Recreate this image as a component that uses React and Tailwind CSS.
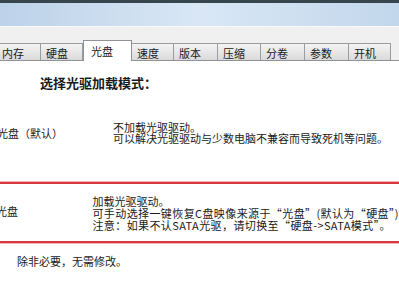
import React from 'react';

const tabs = [
    { label: '内存', w: 'w-[45px]' },
    { label: '硬盘', w: 'w-[43px]' },
    { label: '光盘', w: 'w-[49px]', active: true },
    { label: '速度', w: 'w-[43px]' },
    { label: '版本', w: 'w-[45px]' },
    { label: '压缩', w: 'w-[44px]' },
    { label: '分卷', w: 'w-[45px]' },
    { label: '参数', w: 'w-[45px]' },
    { label: '开机', w: 'w-[43px]' },
];

const App = () => {
    return (
        <div lang="zh-CN" className="w-[399px] h-[300px] overflow-hidden bg-white text-[#1a1a1a] font-['Noto_Sans_CJK_SC','Noto_Sans',sans-serif]">
            {/* window frame + title bar */}
            <div className="h-[3px] bg-[#37464c]"></div>
            <div className="h-[23px] bg-gradient-to-r from-[#bcd2e9] via-[#d9e7f5] to-[#c2d7ec]"></div>
            <div className="h-[16px] bg-[#f0f0f0] border-t border-[#fafafa]"></div>

            {/* tabs */}
            <div className="h-[19px] bg-[#f0f0f0] flex items-end border-b border-[#8f9296] -ml-[4px]">
                {tabs.map(tab => (
                    <div
                        key={tab.label}
                        className={
                            tab.active
                                ? `${tab.w} h-[21px] -mb-px bg-white border border-b-0 border-[#8f9296] pl-[7px] pt-[4px] text-[11px] leading-[12px] relative z-10`
                                : `${tab.w} h-[17px] bg-gradient-to-b from-[#f4f4f4] to-[#dadada] border border-b-0 border-[#9a9c9f] pl-[5px] pt-[3px] text-[11px] leading-[12px] -ml-px first:ml-0`
                        }
                    >
                        {tab.label}
                    </div>
                ))}
            </div>

            {/* content */}
            <div className="pt-[14px]">
                <div className="pl-[40px] text-[13px] leading-[15px] font-bold">选择光驱加载模式：</div>

                <div className="flex mt-[32px] h-[24px] text-[11px] leading-[11px]">
                    <div className="w-[116px] -ml-[3px] pt-[6px] whitespace-nowrap">光盘（默认）</div>
                    <div className="whitespace-nowrap">
                        <div>不加载光驱驱动。</div>
                        <div>可以解决光驱驱动与少数电脑不兼容而导致死机等问题。</div>
                    </div>
                </div>

                <div className="mt-[36px] border-y-2 border-[#d9363e] shadow-[0_0_0_1px_#f2b5b8] h-[61px] flex text-[11px] leading-[11px] whitespace-nowrap">
                    <div className="w-[117px] -ml-[4px] pt-[22px]">光盘</div>
                    <div className="pt-[12px]">
                        <div>加载光驱驱动。</div>
                        <div className="mt-[1px] tracking-[0.4px]">可手动选择一键恢复C盘映像来源于“光盘”(默认为“硬盘”)</div>
                        <div className="mt-[1px] tracking-[0.4px]">注意：如果不认SATA光驱，请切换至“硬盘-&gt;SATA模式”。</div>
                    </div>
                </div>

                <div className="pl-[17px] mt-[13px] text-[11px] leading-[11px]">除非必要，无需修改。</div>
            </div>
        </div>
    );
};

export default App;
